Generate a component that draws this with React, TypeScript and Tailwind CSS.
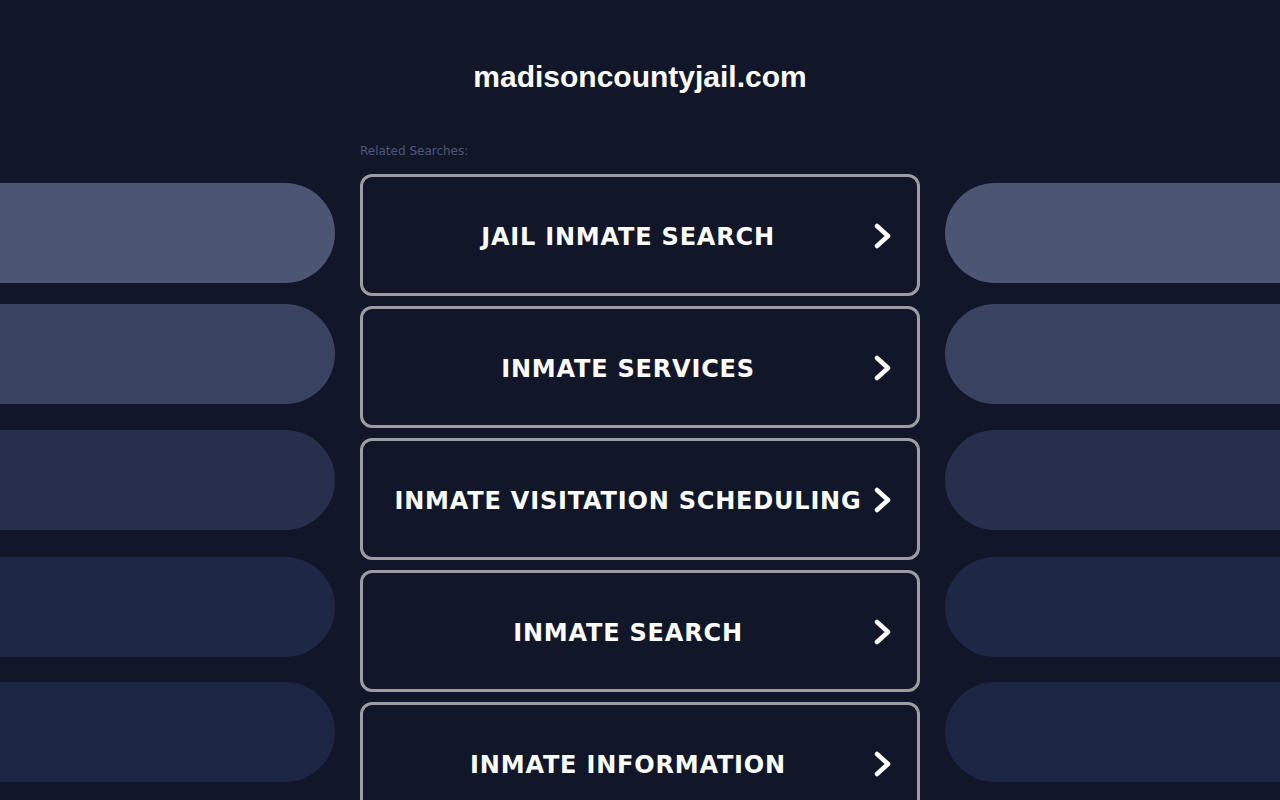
const searches = [
  "JAIL INMATE SEARCH",
  "INMATE SERVICES",
  "INMATE VISITATION SCHEDULING",
  "INMATE SEARCH",
  "INMATE INFORMATION",
];

// decorative side bars, fading from light slate to near-background navy
const bars = [
  { color: "bg-[#4c5573]", gap: "mt-[183px]" },
  { color: "bg-[#3a4262]", gap: "mt-[21px]" },
  { color: "bg-[#272f4d]", gap: "mt-[26px]" },
  { color: "bg-[#1f2746]", gap: "mt-[27px]" },
  { color: "bg-[#1d2545]", gap: "mt-[25px]" },
];

function Chevron() {
  return (
    <svg width="24" height="30" viewBox="0 0 24 30" className="mt-[2px] shrink-0">
      <polyline
        points="10,5 21,15 10,25"
        fill="none"
        stroke="white"
        strokeWidth="4.5"
        strokeLinecap="round"
        strokeLinejoin="round"
      />
    </svg>
  );
}

function SideBars({ side }: { side: "left" | "right" }) {
  const round = side === "left" ? "rounded-r-[50px]" : "rounded-l-[50px]";
  return (
    <div className="flex w-[335px] shrink-0 flex-col">
      {bars.map((b, i) => (
        <div key={i} className={`${b.gap} h-[100px] ${b.color} ${round}`} />
      ))}
    </div>
  );
}

export default function App() {
  return (
    <div className="flex h-[800px] w-full justify-between overflow-hidden bg-[#111729]">
      <SideBars side="left" />

      <main className="flex w-[560px] shrink-0 flex-col">
        <h1 className="mt-[58px] text-center font-['Liberation_Sans',Arial,sans-serif] text-[30px] font-bold leading-[38px] text-white">
          madisoncountyjail.com
        </h1>
        <p className="mt-[47px] font-['DejaVu_Sans',Verdana,sans-serif] text-[12px] leading-[16px] text-[#4e5679]">
          Related Searches:
        </p>
        <ul className="mt-[15px] flex flex-col gap-[10px]">
          {searches.map((s) => (
            <li
              key={s}
              className="flex h-[122px] shrink-0 items-center rounded-[12px] border-[3px] border-[#9c9ca2] px-[26px]"
            >
              <span className="flex-1 pt-[4px] text-center font-['DejaVu_Sans',Verdana,sans-serif] text-[24px] font-bold tracking-[0.8px] text-white">
                {s}
              </span>
              <Chevron />
            </li>
          ))}
        </ul>
      </main>

      <SideBars side="right" />
    </div>
  );
}
